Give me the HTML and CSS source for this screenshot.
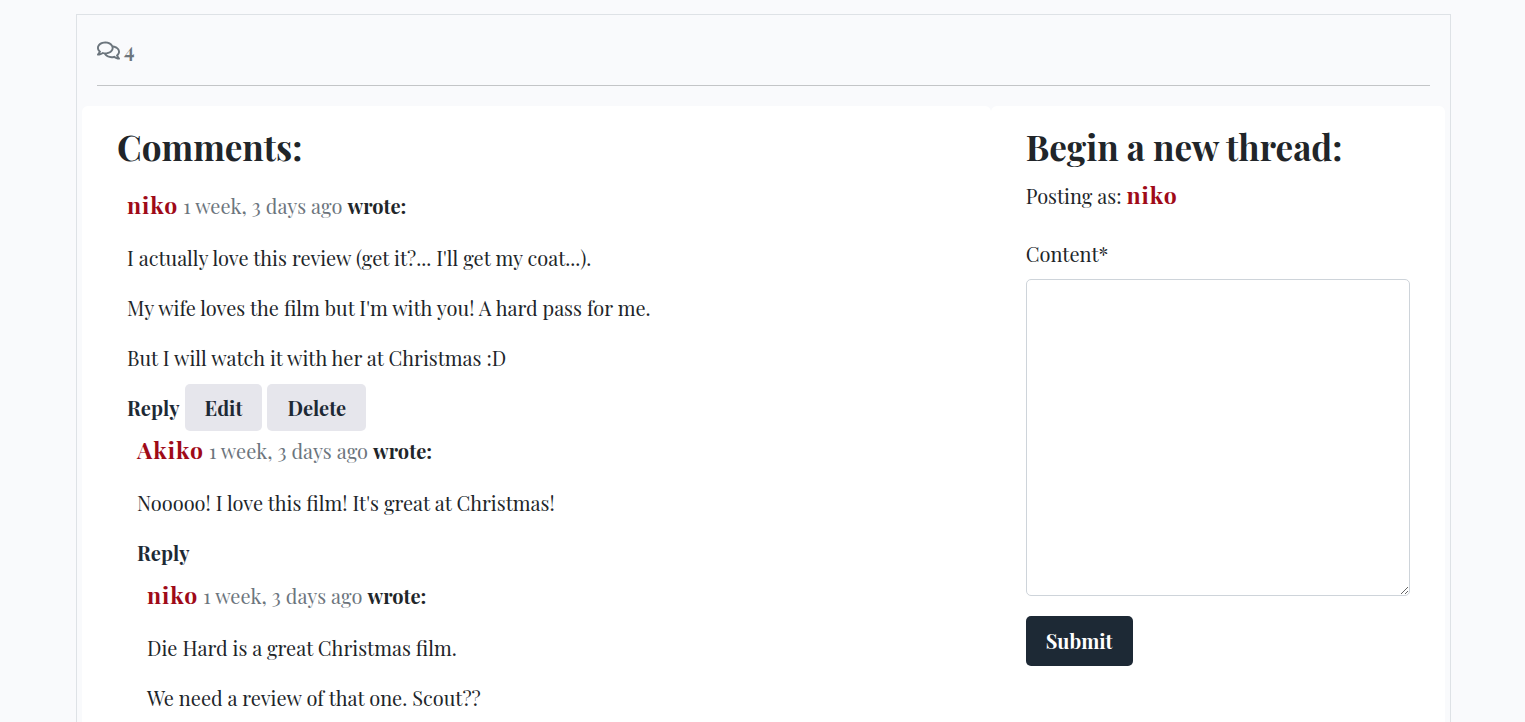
FILE: index.html
```html
<!DOCTYPE html>
<html lang="en">
<head>
<meta charset="utf-8">
<title>Comments</title>
<link rel="stylesheet" href="styles.css">
</head>
<body>
<main class="panel">
  <header class="summary">
    <svg class="icon" viewBox="0 0 576 512" aria-hidden="true"><path fill="currentColor" d="M532 386.2c27.5-27.1 44-61.1 44-98.2 0-80-76.5-146.1-176.2-157.9C368.3 72.5 294.3 32 208 32 93.1 32 0 103.6 0 192c0 37 16.5 71 44 98.2-15.3 30.7-37.3 54.5-37.7 54.9-6.3 6.7-8.1 16.5-4.4 25 3.6 8.5 12 14 21.2 14 53.5 0 96.7-20.2 125.2-38.8 9.2 2.1 18.7 3.7 28.4 4.9C208.1 407.6 281.8 448 368 448c20.8 0 40.8-2.4 59.8-6.8C456.3 459.7 499.4 480 553 480c9.2 0 17.5-5.5 21.2-14 3.6-8.5 1.9-18.3-4.4-25-.4-.3-22.5-24.1-37.8-54.8zm-392.8-92.3L122.1 305c-14.1 9.1-28.5 16.3-43.1 21.4 2.7-4.7 5.4-9.7 8-14.8l15.5-31.1L77.7 256C64.2 242.6 48 220.7 48 192c0-60.7 73.3-112 160-112s160 51.3 160 112-73.3 112-160 112c-16.5 0-33-1.9-49-5.6l-19.8-4.5zM498.3 352l-24.7 24.4 15.5 31.1c2.6 5.1 5.3 10.1 8 14.8-14.6-5.1-29-12.3-43.1-21.4l-17.1-11.1-19.9 4.6c-16 3.7-32.5 5.6-49 5.6-54 0-102.2-20.1-131.3-49.7C338 339.5 416 272.9 416 192c0-3.4-.4-6.7-.7-10C479.7 196.5 528 238.8 528 288c0 28.7-16.2 50.6-29.7 64z"/></svg>
    <span class="count">4</span>
  </header>
  <div class="columns">
    <section class="card">
      <h2 class="title">Comments:</h2>
      <div class="thread">
        <article class="comment">
          <div class="byline"><a class="author" href="#">niko</a> <span class="age">1 week, 3 days ago</span> <strong>wrote:</strong></div>
          <p class="text">I actually love this review (get it?... I'll get my coat...).</p>
          <p class="text">My wife loves the film but I'm with you! A hard pass for me.</p>
          <p class="text">But I will watch it with her at Christmas :D</p>
          <div class="actions">
            <a class="reply" href="#">Reply</a>
            <button class="button" type="button">Edit</button>
            <button class="button" type="button">Delete</button>
          </div>
          <article class="comment">
            <div class="byline"><a class="author" href="#">Akiko</a> <span class="age">1 week, 3 days ago</span> <strong>wrote:</strong></div>
            <p class="text">Nooooo! I love this film! It's great at Christmas!</p>
            <div class="actions"><a class="reply" href="#">Reply</a></div>
            <article class="comment">
              <div class="byline"><a class="author" href="#">niko</a> <span class="age">1 week, 3 days ago</span> <strong>wrote:</strong></div>
              <p class="text">Die Hard is a great Christmas film.</p>
              <p class="text">We need a review of that one. Scout??</p>
            </article>
          </article>
        </article>
      </div>
    </section>
    <section class="card">
      <h2 class="title">Begin a new thread:</h2>
      <div class="posting">Posting as: <a class="author" href="#">niko</a></div>
      <form class="form">
        <label class="label" for="content">Content*</label>
        <textarea class="field" id="content" name="content" rows="10" required></textarea>
        <button class="button submit" type="submit">Submit</button>
      </form>
    </section>
  </div>
</main>
</body>
</html>
```
FILE: styles.css
```css
* { box-sizing: border-box; }

body {
  display: flex;
  flex-direction: column;
  min-height: 100vh;
  margin: 0;
  padding: 14px 74px 0 76px;
  background: #f9fafc;
  color: #212529;
  font: 20px/30px "Playfair Display", "Liberation Serif", serif;
}

.panel {
  display: flex;
  flex: 1;
  flex-direction: column;
  border: 1px solid #dee2e6;
  border-bottom: 0;
}

.summary {
  display: flex;
  align-items: center;
  gap: 4px;
  margin: 0 20px 20px;
  padding: 20px 0;
  border-bottom: 1px solid #c3c5c7;
  color: #6c757d;
}

.icon { width: 23px; height: 21px; }
.count { font-weight: bold; }

.columns {
  display: grid;
  flex: 1;
  grid-template-columns: 2fr 1fr;
  padding: 0 5px;
}

.card {
  padding: 20px 35px 0;
  border-radius: 6px 6px 0 0;
  background: #fff;
}

.title {
  margin: 0 0 12px;
  font-size: 35px;
  line-height: 42px;
}

.thread { padding-top: 10px; }
.comment { padding-left: 10px; }

.byline {
  height: 32px;
  margin-bottom: 21px;
  line-height: 32px;
}

.author {
  color: #9f0a18;
  font-size: 23px;
  font-weight: bold;
  letter-spacing: 1px;
  line-height: 30px;
  text-decoration: none;
}

.age { color: #6c757d; }

.text { margin: 0 0 20px; }

.actions {
  display: flex;
  align-items: center;
  gap: 5px;
  min-height: 47px;
  margin: -9px 0 4px;
}

.reply {
  color: #1d2935;
  font-weight: bold;
  text-decoration: none;
}

.button {
  padding: 9px 20px 8px;
  border: 0;
  border-radius: 5px;
  background: #e6e6ec;
  color: #1d2935;
  font: inherit;
  font-weight: bold;
}

.posting { height: 30px; margin-bottom: 29px; }

.form {
  display: flex;
  flex-direction: column;
  align-items: flex-start;
}

.label { margin-bottom: 10px; }

.field {
  width: 100%;
  height: 317px;
  margin-bottom: 20px;
  border: 1px solid #ced4da;
  border-radius: 5px;
  background: #fff;
  font: inherit;
}

.submit {
  padding: 10px 20px;
  background: #1d2935;
  color: #fff;
}
```
